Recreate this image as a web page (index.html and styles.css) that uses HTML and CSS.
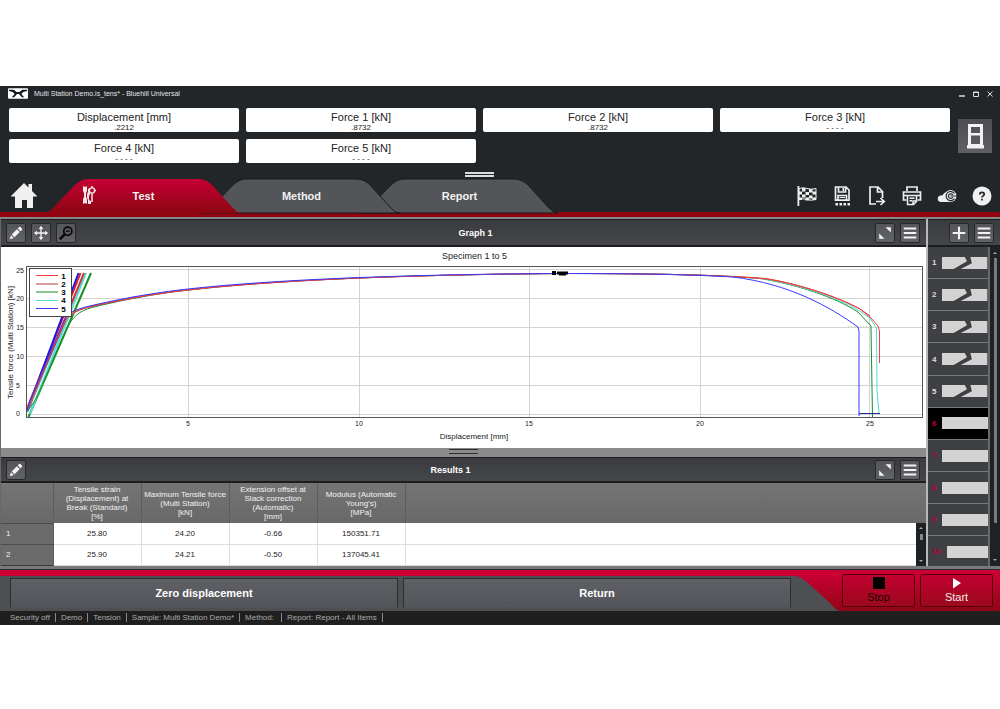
FILE: index.html
```html
<!DOCTYPE html>
<html lang="en">
<head>
  <meta charset="UTF-8" />
  <meta name="viewport" content="width=device-width, initial-scale=1.0"/>
  <title>Multi Station Demo.is_tens* - Bluehill Universal</title>
  <link rel="stylesheet" href="styles.css">
</head>
<body>

  <!-- shared icons -->
  <svg class="sprite" aria-hidden="true">
    <symbol id="i-pencil" viewBox="0 0 20 20"><path fill="#f2f2f2" d="M3 17l1.4-4.6 3.2 3.2zM5.200 11.600l5.800-5.800 3.200 3.200-5.800 5.800zM11.900 4.900l1.500-1.500q.8-.6 1.500 0l1.700 1.700q.6.7 0 1.500l-1.500 1.500z"/></symbol>
    <symbol id="i-expand" viewBox="0 0 20 20"><path fill="#f2f2f2" d="M10.500 3.500h6v6zM3.500 10.500l6 6h-6z"/></symbol>
    <symbol id="i-menu" viewBox="0 0 20 20"><path stroke="#f2f2f2" stroke-width="2.400" d="M3 5h14M3 10h14M3 15h14"/></symbol>
    <symbol id="i-broken" viewBox="0 0 45 12" preserveAspectRatio="none"><path fill="#d3d3d3" d="M0 0h22.500l2.200 4.300L11.500 12H0zM28 0h17v12H18.500l11-5.700z"/></symbol>
  </svg>

  <div class="app">
    <div class="titlebar">
      <svg class="logo" viewBox="0 0 21 11"><rect width="21" height="11" rx="1" fill="#fff"/><path fill="#16191b" d="M1 1.500h5l3 2.500h3l3-2.500h5v1.500l-4 1-2 2 3 3.500h-2.500L11.500 6h-2L6.500 9.500H4L7 6 5 4 1 3z"/></svg>
      <span class="app-title">Multi Station Demo.is_tens* - Bluehill Universal</span>
      <div class="window-buttons">
        <button aria-label="Minimize"><svg viewBox="0 0 6 6"><path d="M0 5h6" stroke="#ddd" stroke-width="1.500"/></svg></button>
        <button aria-label="Maximize"><svg viewBox="0 0 6 6"><path d="M.5 1h5v4.500h-5zM.5 1.500h5" fill="none" stroke="#ddd"/></svg></button>
        <button aria-label="Close"><svg viewBox="0 0 6 6"><path d="M.5.5l5 5M5.500.5l-5 5" stroke="#ddd"/></svg></button>
      </div>
    </div>

    <div class="deck">
      <div class="readouts">
        <div class="readout"><div>Displacement [mm]</div><div class="value">.2212</div></div>
        <div class="readout"><div>Force 1 [kN]</div><div class="value">.8732</div></div>
        <div class="readout"><div>Force 2 [kN]</div><div class="value">.8732</div></div>
        <div class="readout"><div>Force 3 [kN]</div><div class="value">- - - -</div></div>
        <div class="readout"><div>Force 4 [kN]</div><div class="value">- - - -</div></div>
        <div class="readout"><div>Force 5 [kN]</div><div class="value">- - - -</div></div>
      </div>
      <button class="frame-button" aria-label="Frame">
        <svg viewBox="0 0 34 34"><path fill="#f2f2f2" fill-rule="evenodd" d="M10 5h15v21h1v3.500H9V26h1zM13 8v6h9V8zM13 16.500V25h9v-8.500z"/></svg>
      </button>
    </div>
    <div class="grip"></div>

    <div class="nav">
      <button class="home" aria-label="Home">
        <svg viewBox="0 0 28 27"><path fill="#f0f0f0" d="M14 1l4.500 4.500V2H22v7l5.500 5.500H23V26h-6v-8h-5v8H5V14.500H.5z"/></svg>
      </button>
      <div class="tabs">
        <button class="tab active">
          <svg class="tab-shape" viewBox="0 0 197 34" preserveAspectRatio="none">
            <defs><linearGradient id="red" x2="0" y2="1"><stop offset="0" stop-color="#c60034"/><stop offset="1" stop-color="#8c0612"/></linearGradient></defs>
            <path d="M-2 34C3 34 6 31 9 28L28 8C33 3 37 0 44 0H152C159 0 163 2 168 7L187 28C190 31 193 34 197 34Z"/>
          </svg>
          <svg class="tab-icon" viewBox="0 0 14 20"><path fill="#f2e6e8" d="M1 1l2 1 2-1v5L4 8v4l1 2v5l-2-1-2 1v-5l1-2V8L1 6zM6 4l2-1v6l-1 2v4l2 1v3H6v-4l-1-2V9l1-2z"/><circle cx="10" cy="5.500" r="2.600" fill="none" stroke="#f2e6e8" stroke-width="1.400"/><path d="M10 8v9M10 1v2M12.500 5.500H14" stroke="#f2e6e8" stroke-width="1.500"/></svg>
          <span>Test</span>
        </button>
        <button class="tab">
          <svg class="tab-shape" viewBox="0 0 197 34" preserveAspectRatio="none"><path d="M-2 34C3 34 6 31 9 28L28 8C33 3 37 0 44 0H152C159 0 163 2 168 7L187 28C190 31 193 34 197 34Z"/></svg>
          <span>Method</span>
        </button>
        <button class="tab">
          <svg class="tab-shape" viewBox="0 0 197 34" preserveAspectRatio="none"><path d="M-2 34C3 34 6 31 9 28L28 8C33 3 37 0 44 0H152C159 0 163 2 168 7L187 28C190 31 193 34 197 34Z"/></svg>
          <span>Report</span>
        </button>
      </div>
      <div class="tools">
        <button aria-label="Finish sample">
          <svg viewBox="0 0 20 20"><path fill="#eee" d="M.5 0h1.800v20H.5z"/><path fill="none" stroke="#eee" d="M2 2.500q4 -1.500 8 0t9 0v11q-5 1.500-9 0t-8 0z"/><path fill="#eee" d="M5 2h3.500v3.500H5zM12 3h3.500v3.500H12zM2 5.500h3v3H2zM8.500 6H12v3H8.500zM15.500 5.500H19v3h-3.500zM5 8.500h3.500v3H5zM12 9.500h3.500v3H12zM2 11.500h3v2.500H2zM8.500 11.500H12v3H8.500zM15.500 11.500H19V14h-3.500z"/></svg>
        </button>
        <button aria-label="Save as">
          <svg viewBox="0 0 20 20"><path fill="none" stroke="#eee" stroke-width="1.700" d="M3.500 1h10.500l3 3v10.200H3.500zM6.500 1v5h7V1M6 14V9.500h8.500V14"/><path fill="#eee" d="M10.500 2h1.500v3h-1.500zM7.500 11h5.500v1H7.500zM3.500 17H6v2.500H3.500zM7.500 17H10v2.500H7.500zM11.500 17H14v2.500h-2.500zM15.500 17h2.500v2.500h-2.500z"/></svg>
        </button>
        <button aria-label="Export">
          <svg viewBox="0 0 20 20"><path fill="none" stroke="#eee" stroke-width="1.700" d="M9 18H3V1h8l4.500 4.500V12M10.500 1v5h5M9 15.500h7.500M13.500 12l3.700 3.500-3.700 3.500"/></svg>
        </button>
        <button aria-label="Print">
          <svg viewBox="0 0 20 20"><path fill="none" stroke="#eee" stroke-width="1.700" d="M5 5V1h10v4M4.500 14H1.500V6h17v8h-3"/><path fill="none" stroke="#eee" stroke-width="1.500" d="M2 9.500h16M5.500 9.500v9h6l3-3v-6M11 18.500V15h3.500M7.500 12.200h5M7.500 14.700h2.500"/></svg>
        </button>
        <button aria-label="Cloud">
          <svg viewBox="0 0 20 20"><path fill="#eee" d="M3.500 16a3.300 3.300 0 010-6.500q1-.3 2 0Q7 6 10.500 6L13 16z"/><circle cx="13.500" cy="10" r="6" fill="#eee"/><path fill="none" stroke="#222629" stroke-width="1.200" d="M17.500 7.500a4.600 4.600 0 100 5.200M15.800 9a2.300 2.300 0 100 2.200M13.500 10H20"/></svg>
        </button>
        <button aria-label="Help">
          <svg viewBox="0 0 20 20"><circle cx="10" cy="10" r="9.500" fill="#f0f0f0"/><path fill="none" stroke="#222629" stroke-width="1.700" d="M7.800 8.400q0-2 2.200-2t2.200 1.800q0 1-1.200 1.700T10 11.500M10 12.800v1.700"/></svg>
        </button>
      </div>
    </div>

    <div class="workspace">
      <div class="main">
        <div class="panel-head">
          <button class="icon-button" aria-label="Edit graph"><svg><use href="#i-pencil"/></svg></button>
          <button class="icon-button" aria-label="Pan"><svg viewBox="0 0 20 20"><path stroke="#f2f2f2" stroke-width="1.500" d="M10 5v10M5 10h10"/><path fill="#f2f2f2" d="M10 2l2.500 3.500h-5zM10 18l2.500-3.500h-5zM2 10l3.500-2.500v5zM18 10l-3.500-2.500v5z"/></svg></button>
          <button class="icon-button" aria-label="Zoom out"><svg viewBox="0 0 20 20"><circle cx="12" cy="8" r="4.500" fill="none" stroke="#0a0a0a" stroke-width="2"/><path stroke="#0a0a0a" stroke-width="2.800" d="M8.500 11.500l-5.500 5.500"/><path stroke="#0a0a0a" stroke-width="1.500" d="M10 8h4"/></svg></button>
          <h2>Graph 1</h2>
          <button class="icon-button" aria-label="Expand graph"><svg><use href="#i-expand"/></svg></button>
          <button class="icon-button" aria-label="Graph menu"><svg><use href="#i-menu"/></svg></button>
        </div>

        <svg class="chart" viewBox="1 247 925 201" role="img" aria-label="Specimen 1 to 5">
          <text class="chart-title" x="474.500" y="259">Specimen 1 to 5</text>
          <path class="grid" d="M27 269.500H922M27 298.500H922M27 327.500H922M27 356.500H922M27 385.500H922M27 414.500H922M188.500 267V417M359.500 267V417M529.500 267V417M700.500 267V417M869.500 267V417"/>
          <rect class="frame" x="26.500" y="266.500" width="896" height="151"/>
          <path d="M848 326.500h22" stroke="#d8cfae" stroke-dasharray="1 2"/>

          <!-- modulus lines -->
          <g class="modulus">
            <path class="s3" d="M28.500 417L91 273"/>
            <path class="s4" d="M30 414L86 273"/>
            <path class="s2" d="M27.500 411L84 273"/>
            <path class="s1" d="M27 409L80.500 273"/>
            <path class="s5" d="M27 411L78.500 273"/>
          </g>

          <!-- specimen curves -->
          <g class="curve">
            <path class="s3" d="M27 412L36 399L66 330C72 317 79 311 92 307.500C130 298 165 292.500 188 290C260 281.500 380 275 560 273.500C660 273.500 720 275 760 278.500C795 284 835 297 858 312L871 326V328L872.500 417"/>
            <path class="s4" d="M27 411L66 322C72 312 76 311 90 306.500C130 297 165 292 188 289.800C260 281.500 380 275 560 273.500C660 273.500 720 275 765 279C800 285 838 298 858 310L870 318L876.500 328L877 390L879 413"/>
            <path class="s2" d="M27 410L66 320C71 313 80 309 92 306.500C130 298 165 292.500 188 290.200C260 281.800 380 275 560 273.500C660 273.500 720 275 765 278.500C800 284 838 297 860 309L870 316"/>
            <path class="s1" d="M27 407L66 318C70 313 80 309 92 306C130 297.500 165 292 188 289.800C260 281.500 380 275 560 273.500C660 273.500 720 275 768 279C800 284.500 838 297 860 309L871 318L878 326L879.500 331V363"/>
            <path class="s5" d="M27 411L30 400L66 316C70 311.500 80 308 92 305.500C130 296.500 165 291.500 188 289C260 281 380 274.500 560 273.500C640 273.500 690 274.500 733 277C790 284 830 307 858 327L859 331V416"/>
            <path d="M859 413.500H880" stroke="#26268f"/>
          </g>
          <path fill="#000" d="M552 271h4v4h-4zM557 271.500h11v3h-2v1h-7v-1h-2z"/>

          <rect class="legend" x="29.500" y="268.500" width="42" height="48"/>
          <g class="legend-lines">
            <path class="s1" d="M36 275.500h22"/><path class="s2" d="M36 284h22"/><path class="s3" d="M36 292h22"/><path class="s4" d="M36 300.500h22"/><path class="s5" d="M36 308.500h22"/>
          </g>
          <g class="legend-text">
            <text x="63.500" y="279">1</text><text x="63.500" y="287">2</text><text x="63.500" y="295">3</text><text x="63.500" y="303">4</text><text x="63.500" y="312">5</text>
          </g>

          <g class="ticks-y">
            <text x="24" y="273">25</text><text x="24" y="301">20</text><text x="24" y="330">15</text><text x="24" y="359">10</text><text x="20" y="388">5</text><text x="20" y="416">0</text>
          </g>
          <g class="ticks-x">
            <text x="188" y="426">5</text><text x="359" y="426">10</text><text x="529" y="426">15</text><text x="700" y="426">20</text><text x="870" y="426">25</text>
          </g>
          <text class="axis" x="474" y="439">Displacement [mm]</text>
          <text class="axis" transform="rotate(-90 12.500 342)" x="12" y="342">Tensile force (Multi Station) [kN]</text>
        </svg>

        <div class="splitter"></div>

        <div class="panel-head results-head">
          <button class="icon-button" aria-label="Edit results"><svg><use href="#i-pencil"/></svg></button>
          <h2>Results 1</h2>
          <button class="icon-button" aria-label="Expand results"><svg><use href="#i-expand"/></svg></button>
          <button class="icon-button" aria-label="Results menu"><svg><use href="#i-menu"/></svg></button>
        </div>

        <div class="results">
          <table>
            <thead>
              <tr>
                <th class="row-no"></th>
                <th>Tensile strain<br>(Displacement) at<br>Break (Standard)<br>[%]</th>
                <th>Maximum Tensile force<br>(Multi Station)<br>[kN]</th>
                <th>Extension offset at<br>Slack correction<br>(Automatic)<br>[mm]</th>
                <th>Modulus (Automatic<br>Young's)<br>[MPa]</th>
                <th class="rest"></th>
              </tr>
            </thead>
            <tbody>
              <tr><th>1</th><td>25.80</td><td>24.20</td><td>-0.66</td><td>150351.71</td><td></td></tr>
              <tr><th>2</th><td>25.90</td><td>24.21</td><td>-0.50</td><td>137045.41</td><td></td></tr>
            </tbody>
          </table>
          <div class="results-scroll"><i class="up"></i><i class="thumb"></i><i class="down"></i></div>
        </div>
      </div>

      <div class="side">
        <div class="panel-head side-head">
          <button class="icon-button" aria-label="Add specimen"><svg viewBox="0 0 20 20"><path stroke="#f2f2f2" stroke-width="2.400" d="M10 3v14M3 10h14"/></svg></button>
          <button class="icon-button" aria-label="Specimen menu"><svg><use href="#i-menu"/></svg></button>
        </div>
        <div class="side-body">
          <ol class="specimens">
            <li><span>1</span><svg><use href="#i-broken"/></svg></li>
            <li><span>2</span><svg><use href="#i-broken"/></svg></li>
            <li><span>3</span><svg><use href="#i-broken"/></svg></li>
            <li><span>4</span><svg><use href="#i-broken"/></svg></li>
            <li><span>5</span><svg><use href="#i-broken"/></svg></li>
            <li class="pending current"><span>6</span><div class="bar"></div></li>
            <li class="pending"><span>7</span><div class="bar"></div></li>
            <li class="pending"><span>8</span><div class="bar"></div></li>
            <li class="pending"><span>9</span><div class="bar"></div></li>
            <li class="pending"><span>10</span><div class="bar"></div></li>
          </ol>
          <div class="side-scroll"><i class="up"></i><i class="thumb"></i><i class="down"></i></div>
        </div>
      </div>
    </div>

    <div class="footer">
      <div class="soft-keys">
        <button>Zero displacement</button>
        <button>Return</button>
      </div>
      <svg class="slope" viewBox="0 0 47 35" preserveAspectRatio="none"><path fill="#4d4f53" d="M0 0C6 0 9 3 14 7L36 27C40 31 42 35 47 35H0z"/></svg>
      <div class="run-keys">
        <button class="stop"><svg viewBox="0 0 12 12"><path d="M0 0h12v12H0z"/></svg>Stop</button>
        <button class="start"><svg viewBox="0 0 12 12"><path d="M2 1v10.500l8-5.500z"/></svg>Start</button>
      </div>
    </div>

    <div class="status">
      <span>Security off</span><span>Demo</span><span>Tension</span><span>Sample: Multi Station Demo*</span><span class="method">Method:</span><span>Report: Report - All Items</span>
    </div>
  </div>

</body>
</html>
```

FILE: styles.css
```css
* { margin: 0; padding: 0; box-sizing: border-box; }
body {
  font-family: "Liberation Sans", Arial, sans-serif;
  font-size: 8px;
  background: #fff;
  padding: 86px 0;
}
button { font-family: inherit; border: none; background: none; cursor: pointer; }
svg { display: block; }
.sprite { position: absolute; width: 0; height: 0; }
.app { background: #222629; }

/* title bar */
.titlebar { display: flex; align-items: center; height: 15px; padding: 0 7px 0 8px; gap: 6px; }
.logo { width: 20px; height: 11px; }
.app-title { flex: 1; font-size: 7px; color: #e4e4e4; }
.window-buttons { display: flex; gap: 8px; }
.window-buttons svg { width: 6px; height: 6px; }

/* live displays */
.deck { display: flex; align-items: center; gap: 8px; padding: 7px 8px 0 9px; }
.readouts { flex: 1; display: grid; grid-template-columns: repeat(4, 1fr); gap: 7px; }
.readout {
  height: 24px;
  padding-top: 3px;
  background: #fff;
  border-radius: 2px;
  text-align: center;
  font-size: 11px;
  line-height: 12px;
  color: #222;
}
.readout .value { font-size: 8px; line-height: 9px; }
.frame-button { width: 34px; height: 34px; background: linear-gradient(#4d4e53, #5f6066); }
.grip { padding: 9px 50px 2px 9px; }
.grip::before { content: ""; display: block; width: 29px; height: 5px; margin: 0 auto; box-sizing: border-box; border-top: 2px solid #ddd; border-bottom: 2px solid #ddd; }

/* tabs */
.nav { display: flex; align-items: center; height: 38px; padding: 0 8px 5px 10px; background: linear-gradient(#930310, #930310) bottom / 100% 5px no-repeat; }
.home { width: 28px; height: 27px; }
.tabs { display: flex; flex: 1; margin-left: 7px; }
.tab { position: relative; width: 197px; height: 34px; font-size: 11px; font-weight: bold; color: #f2f2f2; }
.tab + .tab { margin-left: -39px; }
.tab:nth-child(1) { z-index: 3; }
.tab:nth-child(2) { z-index: 2; }
.tab:nth-child(3) { z-index: 1; }
.tab-shape { position: absolute; inset: 0; width: 100%; height: 100%; overflow: visible; fill: #545559; stroke: #191b1d; stroke-width: 1; }
.tab.active .tab-shape path { fill: url(#red); stroke: none; }
.tab-icon { position: absolute; left: 37px; top: 6px; width: 14px; height: 20px; }
.tab span { position: relative; }
.tools { display: flex; gap: 15px; }
.tools svg { width: 20px; height: 20px; }

/* workspace */
.workspace { display: flex; border-top: 2px solid #858789; border-bottom: 3px solid #77797b; background: #393c3f; }
.main { flex: 1; border-left: 1px solid #66686a; }
.panel-head {
  display: flex;
  align-items: center;
  gap: 5px;
  height: 28px;
  padding: 0 6px 0 5px;
  background: linear-gradient(#393b3e, #45474a);
  border-top: 1px solid #1b1d1f;
  border-bottom: 2px solid #1b1d1f;
}
.panel-head h2 { flex: 1; font-size: 9px; color: #fff; text-align: center; }
.icon-button { width: 20px; height: 20px; border: 1px solid #26282a; border-radius: 2px; background: linear-gradient(#55565b, #626368); }
.icon-button svg { width: 18px; height: 18px; }

/* chart */
.chart { width: 100%; background: #fff; fill: #222; }
.chart-title { font-size: 9px; text-anchor: middle; }
.axis { font-size: 8px; text-anchor: middle; }
.grid { stroke: #d3d3d3; }
.frame { fill: none; stroke: #555; }
.modulus { fill: none; stroke-width: 2px; }
.curve { fill: none; stroke-width: 1px; }
.s1 { stroke: #ff3b3b; }
.s2 { stroke: #bd3b3b; }
.s3 { stroke: #17902a; }
.s4 { stroke: #52dcd9; }
.s5 { stroke: #3838ff; }
.modulus .s1 { stroke: #f01818; }
.modulus .s5 { stroke: #1818f0; }
.legend { fill: #fff; stroke: #444; }
.legend-lines { stroke-width: 1px; }
.legend-text { font-size: 8px; font-weight: bold; text-anchor: middle; fill: #000; }
.ticks-y { font-size: 7px; text-anchor: end; }
.ticks-x { font-size: 7px; text-anchor: middle; }

.splitter { height: 9px; background: #8b8b8b; padding-top: 1px; }
.splitter::before { content: ""; display: block; box-sizing: border-box; width: 29px; height: 5px; margin: 0 auto; border-top: 1px solid #2e2e2e; border-bottom: 1px solid #2e2e2e; }

/* results */
.results-head { height: 26px; }
.results { position: relative; }
table { width: 100%; border-collapse: collapse; table-layout: fixed; }
thead { background: linear-gradient(#757575, #686868); }
th { font-size: 8px; line-height: 9px; font-weight: normal; color: #f2f2f2; border-right: 1px solid #5c5c5c; }
thead th { height: 40px; width: 88px; }
thead .row-no { width: 52px; }
thead .rest { width: auto; border: none; }
tbody tr { height: 21px; background: #fff; }
tbody th { background: #6b6b6b; text-align: left; padding-left: 5px; border-top: 1px solid #4c4c4c; }
td { text-align: center; color: #222; border-right: 1px solid #ddd; border-bottom: 1px solid #ddd; }
.results-scroll { position: absolute; right: 0; bottom: 0; width: 10px; height: 43px; background: #1e2123; display: flex; flex-direction: column; align-items: center; padding: 4px 0; }
.up, .down { border: 2px solid transparent; }
.up { border-bottom-color: #aaa; border-top: none; }
.down { border-top-color: #aaa; border-bottom: none; margin-top: auto; }
.results-scroll .thumb { width: 3px; height: 6px; margin-top: 5px; background: #858585; }

/* specimen list */
.side { width: 74px; display: flex; flex-direction: column; border-left: 2px solid #b8b8b8; }
.side-head { justify-content: flex-end; }
.side-body { flex: 1; display: flex; overflow: hidden; }
.specimens { flex: 1; display: flex; flex-direction: column; list-style: none; margin-bottom: -3px; border-right: 2px solid #66686a; }
.specimens li { flex: 1; display: flex; align-items: center; gap: 6px; padding-left: 4px; background: #3e4043; border-bottom: 1px solid #77797b; font-weight: bold; color: #ddd; }
.specimens svg, .bar { flex: 1; height: 12px; }
.specimens svg { width: 45px; }
.specimens .bar { background: #d3d3d3; }
.specimens .pending { color: #c00035; }
.specimens .current { background: #000; }
.side-scroll { width: 10px; display: flex; flex-direction: column; align-items: center; background: #1e2225; padding: 5px 0; }
.side-scroll .thumb { width: 3px; flex: 1; margin: 4px 0 36px; background: #77797b; }
.side-scroll .down { margin-top: 0; }

/* footer */
.footer { display: flex; height: 42px; border-top: 1px solid #2a2c2e; background: linear-gradient(#cb0034 10%, #900615); }
.soft-keys { flex: 1; display: flex; gap: 5px; margin-top: 6px; padding: 2px 3px 3px 10px; background: #4d4f53; }
.soft-keys button { flex: 1; font-size: 11px; font-weight: bold; color: #fff; background: linear-gradient(#5f6065, #54555a); border: 1px solid #2c2e30; border-bottom-color: #505156; }
.slope { width: 47px; height: 35px; margin-top: 6px; }
.run-keys { display: flex; gap: 5px; padding: 4px 7px 4px 1px; }
.run-keys button { width: 73px; display: flex; flex-direction: column; align-items: center; justify-content: center; gap: 2px; font-size: 11px; line-height: 12px; border: 1px solid #56000d; border-radius: 2px; background: linear-gradient(#c10030, #9b0a1c); }
.run-keys svg { width: 12px; height: 12px; }
.stop { color: #1a0004; }
.start { color: #f5e8ea; fill: #fff; }

.status { display: flex; align-items: center; height: 14px; padding-left: 10px; background: #1f1f1f; color: #aaa; }
.status span { padding-right: 5px; margin-right: 5px; border-right: 1px solid #888; line-height: 9px; }
.status .method { padding-right: 7px; }
```
